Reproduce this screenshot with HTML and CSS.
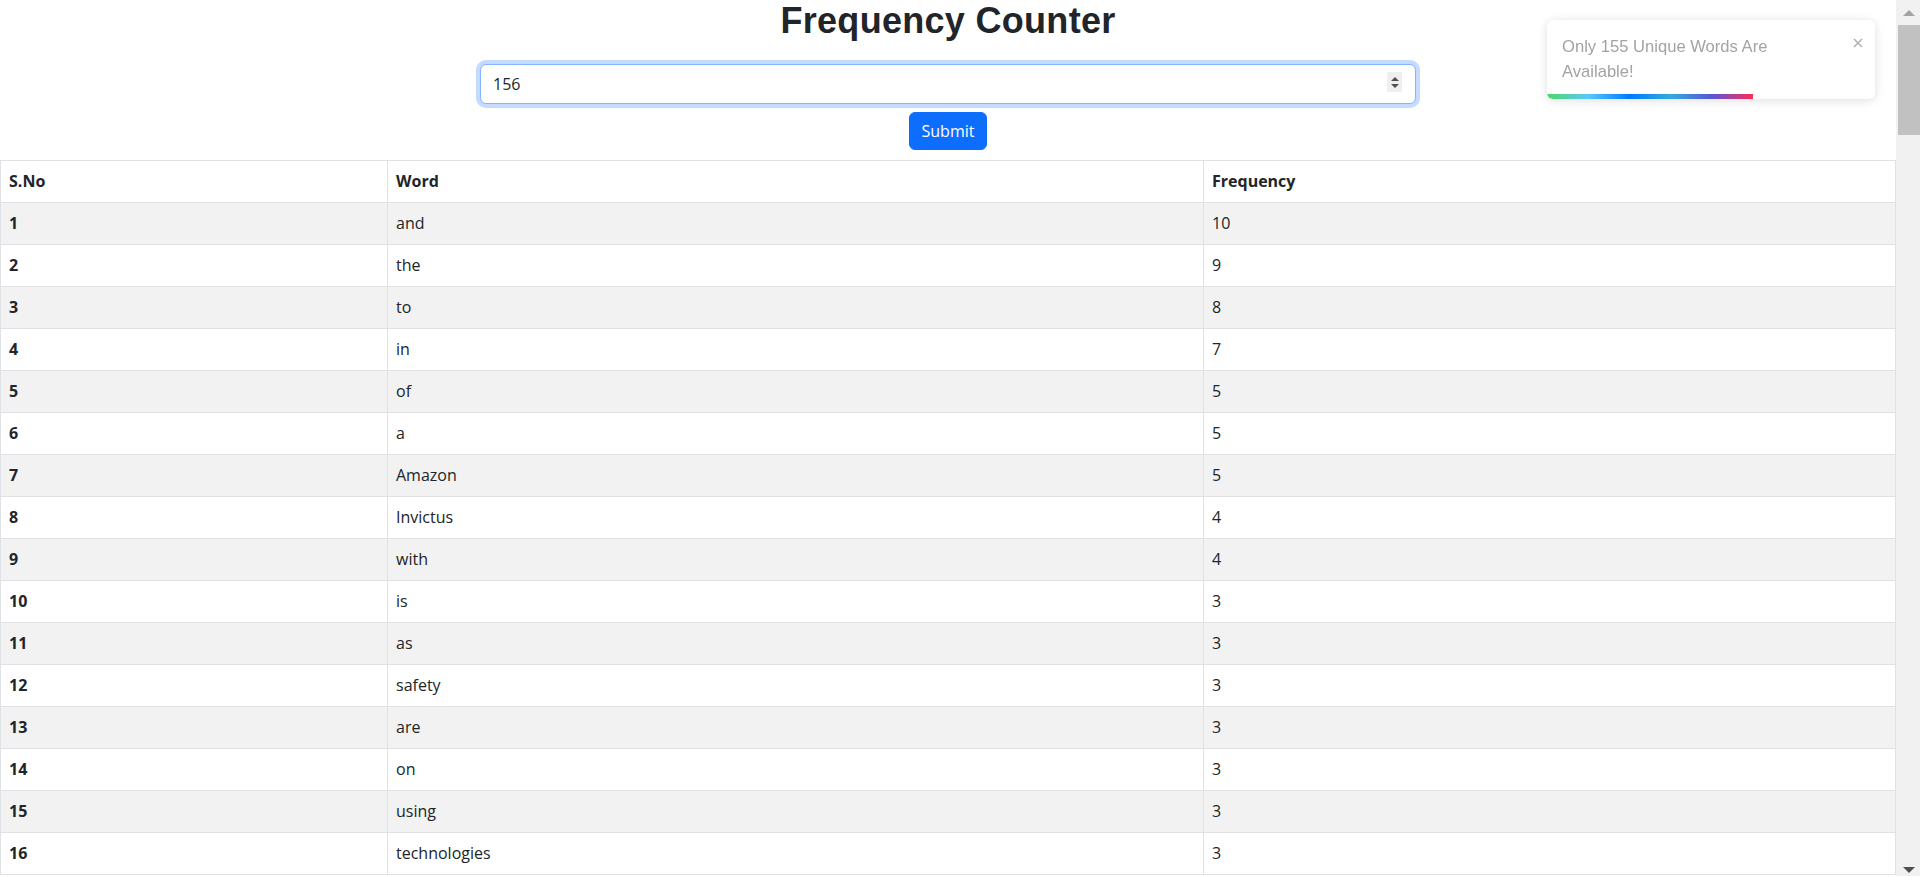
FILE: index.html
```html
<!DOCTYPE html>
<html lang="en">
<head>
<meta charset="utf-8">
<title>Frequency Counter</title>
<link rel="stylesheet" href="styles.css">
</head>
<body>
<main class="page">
  <h1 class="page-title">Frequency Counter</h1>
  <form class="search-form">
    <div class="number-field">
      <input class="number-input is-focused" type="text" value="156">
      <span class="spinner"><span class="spin-up"></span><span class="spin-down"></span></span>
    </div>
    <button class="submit-btn" type="button">Submit</button>
  </form>
  <table class="freq-table">
    <colgroup><col class="col-sno"><col class="col-word"><col class="col-freq"></colgroup>
    <thead><tr><th>S.No</th><th>Word</th><th>Frequency</th></tr></thead>
    <tbody>
      <tr><th>1</th><td>and</td><td>10</td></tr>
      <tr><th>2</th><td>the</td><td>9</td></tr>
      <tr><th>3</th><td>to</td><td>8</td></tr>
      <tr><th>4</th><td>in</td><td>7</td></tr>
      <tr><th>5</th><td>of</td><td>5</td></tr>
      <tr><th>6</th><td>a</td><td>5</td></tr>
      <tr><th>7</th><td>Amazon</td><td>5</td></tr>
      <tr><th>8</th><td>Invictus</td><td>4</td></tr>
      <tr><th>9</th><td>with</td><td>4</td></tr>
      <tr><th>10</th><td>is</td><td>3</td></tr>
      <tr><th>11</th><td>as</td><td>3</td></tr>
      <tr><th>12</th><td>safety</td><td>3</td></tr>
      <tr><th>13</th><td>are</td><td>3</td></tr>
      <tr><th>14</th><td>on</td><td>3</td></tr>
      <tr><th>15</th><td>using</td><td>3</td></tr>
      <tr><th>16</th><td>technologies</td><td>3</td></tr>
    </tbody>
  </table>
</main>
<div class="scrollbar" aria-hidden="true">
  <div class="sb-btn sb-up"><span class="arrow-up"></span></div>
  <div class="sb-thumb"></div>
  <div class="sb-track"></div>
  <div class="sb-btn sb-down"><span class="arrow-down"></span></div>
</div>
<div class="toast" role="alert">
  <div class="toast-body"><p class="toast-text">Only 155 Unique Words Are Available!</p></div>
  <button class="toast-close" type="button" aria-label="close">
    <svg width="10" height="10" viewBox="0 0 10 10"><path d="M1 1L9 9M9 1L1 9" stroke="currentColor" stroke-width="1.6" fill="none"/></svg>
  </button>
  <div class="toast-progress"></div>
</div>
</body>
</html>
```
FILE: styles.css
```css
html {
  background: #fff;
  overflow: hidden;
}

body {
  margin: 0;
  height: 100vh;
  display: flex;
  overflow: hidden;
  font-family: "Open Sans", "Noto Sans", sans-serif;
  font-size: 16px;
  line-height: 1.5;
  color: #212529;
}

.page {
  flex: 1;
  min-width: 0;
  overflow: hidden;
}

/* simulated browser scrollbar */
.scrollbar {
  flex: none;
  width: 24px;
  height: 100vh;
  background: #f1f1f1;
  display: flex;
  flex-direction: column;
}
.sb-btn {
  flex: none;
  height: 24px;
  display: flex;
  justify-content: center;
}
.sb-up {
  align-items: flex-start;
  padding-top: 10px;
  box-sizing: border-box;
}
.sb-down {
  align-items: flex-end;
  padding-bottom: 3px;
  box-sizing: border-box;
}
.arrow-up {
  width: 0;
  height: 0;
  border-left: 6px solid transparent;
  border-right: 6px solid transparent;
  border-bottom: 6px solid #a3a3a3;
  margin-left: 1px;
}
.arrow-down {
  width: 0;
  height: 0;
  border-left: 6px solid transparent;
  border-right: 6px solid transparent;
  border-top: 6px solid #505050;
  margin-left: 1px;
}
.sb-thumb {
  flex: none;
  height: 110px;
  margin: 1px 0 0 2px;
  background: #c1c1c1;
}
.sb-track {
  flex: 1;
}

.page-title {
  margin: 0;
  text-align: center;
  font-family: "Liberation Sans", Arial, sans-serif;
  font-weight: 700;
  font-size: 36px;
  line-height: 41px;
  letter-spacing: 0.3px;
  color: #212529;
}

.search-form {
  display: flex;
  flex-direction: column;
  align-items: center;
  gap: 8px;
  margin: 23px 0 0;
}

.number-field {
  position: relative;
  width: 936px;
}

.number-input {
  box-sizing: border-box;
  display: block;
  width: 100%;
  height: 40px;
  padding: 6px 12px;
  font-family: inherit;
  font-size: 16px;
  line-height: 24px;
  color: #212529;
  background: #fff;
  border: 1px solid #ced4da;
  border-radius: 6px;
  outline: none;
}
.number-input.is-focused {
  border-color: #86b7fe;
  box-shadow: 0 0 0 4px rgba(13, 110, 253, 0.25);
}

.spinner {
  position: absolute;
  right: 14px;
  top: 8px;
  width: 15px;
  height: 20px;
  background: #efefef;
  display: flex;
  flex-direction: column;
  align-items: center;
  justify-content: center;
  gap: 3px;
}
.spin-up {
  width: 0;
  height: 0;
  border-left: 4px solid transparent;
  border-right: 4px solid transparent;
  border-bottom: 4px solid #505050;
}
.spin-down {
  width: 0;
  height: 0;
  border-left: 4px solid transparent;
  border-right: 4px solid transparent;
  border-top: 4px solid #505050;
}

.submit-btn {
  font-family: inherit;
  font-size: 16px;
  line-height: 24px;
  color: #fff;
  background: #0d6efd;
  border: 1px solid #0d6efd;
  border-radius: 6px;
  padding: 6px 12px;
  cursor: pointer;
}

.freq-table {
  margin-top: 10px;
  width: 100%;
  border-collapse: collapse;
  table-layout: fixed;
  border: 1px solid #dee2e6;
}
.col-sno { width: 387px; }
.col-word { width: 816px; }

.freq-table th,
.freq-table td {
  padding: 8px;
  line-height: 25px;
  border: 1px solid #dee2e6;
  text-align: left;
  vertical-align: middle;
  color: #212529;
}
.freq-table th {
  font-weight: 700;
}
.freq-table td {
  font-weight: 400;
}
.freq-table tbody tr:nth-child(odd) th,
.freq-table tbody tr:nth-child(odd) td {
  background: #f2f2f2;
}

.toast {
  position: fixed;
  top: 20px;
  right: 45px;
  z-index: 10;
  box-sizing: border-box;
  width: 328px;
  min-height: 79px;
  padding: 8px;
  display: flex;
  background: #fff;
  border-radius: 6px;
  box-shadow: 0 1px 10px rgba(0, 0, 0, 0.1), 0 2px 15px rgba(0, 0, 0, 0.05);
  overflow: hidden;
  font-family: "Liberation Sans", Arial, sans-serif;
}
.toast-body {
  flex: 1;
  padding: 6px 6px 6px 7px;
}
.toast-text {
  margin: 0;
  max-width: 250px;
  font-size: 16.6px;
  line-height: 25px;
  color: #a3a3a3;
}
.toast-close {
  align-self: flex-start;
  margin: 10px 4px 0 0;
  padding: 0;
  width: 10px;
  height: 10px;
  border: 0;
  background: none;
  color: #b3b3b3;
  display: flex;
}
.toast-progress {
  position: absolute;
  left: 0;
  bottom: 0;
  width: 206px;
  height: 5px;
  background: linear-gradient(to right, #4cd964, #5ac8fa, #007aff, #34aadc, #5856d6, #ff2d55);
}
```
